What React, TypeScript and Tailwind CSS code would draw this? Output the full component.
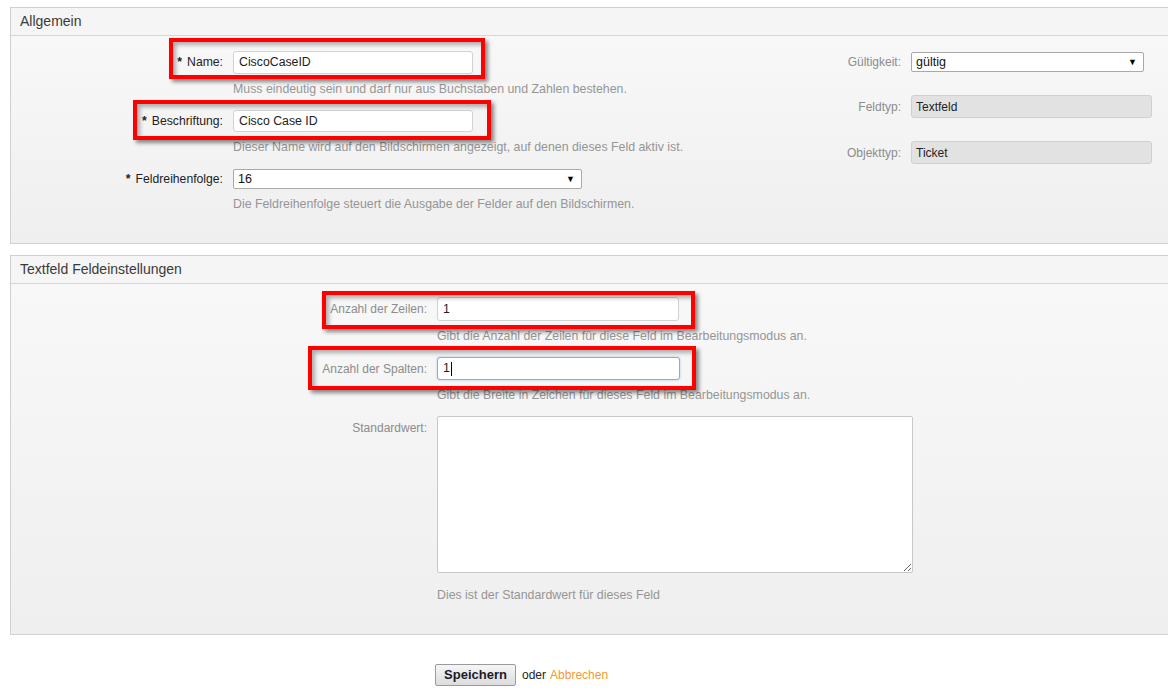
import React from 'react';

const font = { fontFamily: '"Liberation Sans", Arial, sans-serif' };

function RedMark({ className }: { className: string }) {
  return (
    <div
      className={`pointer-events-none absolute border-[4px] border-[#f00] shadow-[3px_3px_4px_rgba(0,0,0,0.45),inset_3px_3px_4px_rgba(0,0,0,0.3)] ${className}`}
    />
  );
}

function Select({ value, className }: { value: string; className: string }) {
  return (
    <div
      className={`flex items-center justify-between rounded-[2px] border border-[#a9a9a9] bg-white pl-[4px] pr-[6px] text-[12.5px] text-[#111] ${className}`}
    >
      <span>{value}</span>
      <span className="text-[9px] leading-none text-black">▼</span>
    </div>
  );
}

function TextInput({ value, className, focus }: { value: string; className: string; focus?: boolean }) {
  return (
    <div
      className={`flex items-center rounded-[3px] border bg-white pl-[5px] text-[12.3px] text-[#222] ${
        focus ? 'border-[#8aaedc] shadow-[0_0_2px_rgba(80,130,200,0.5)]' : 'border-[#d2d2d2]'
      } ${className}`}
    >
      {value}
      {focus && <span className="ml-[1px] h-[14px] w-px bg-black" />}
    </div>
  );
}

function ReadOnly({ value }: { value: string }) {
  return (
    <div className="flex h-[23px] w-[241px] items-center rounded-[3px] border border-[#cfcfcf] bg-[#e2e2e2] pl-[4px] text-[12px] text-[#222]">
      {value}
    </div>
  );
}

function Help({ children, className }: { children: React.ReactNode; className: string }) {
  return <div className={`text-[12.35px] leading-[14px] text-[#959595] ${className}`}>{children}</div>;
}

export default function App() {
  return (
    <div className="h-[692px] w-[1168px] overflow-hidden bg-white" style={font}>
      {/* Allgemein */}
      <div className="ml-[10px] mt-[7px] w-[1170px] border border-[#d0d0d0]">
        <div className="flex h-[28px] items-center border-b border-[#d6d6d6] bg-[#f5f5f5] pl-[9px] text-[14px] text-[#3a3a3a]">
          Allgemein
        </div>
        <div className="relative flex h-[207px] bg-gradient-to-b from-[#f8f8f8] to-[#efefef]">
          <div className="w-[800px] pt-[15px]">
            <div className="flex items-center">
              <label className="w-[222px] pr-[10px] text-right text-[12.2px] text-[#222]">
                <span className="mr-[5px] font-bold">*</span>Name:
              </label>
              <TextInput value="CiscoCaseID" className="h-[23px] w-[240px]" />
            </div>
            <Help className="ml-[222px] mt-[8px]">
              Muss eindeutig sein und darf nur aus Buchstaben und Zahlen bestehen.
            </Help>
            <div className="mt-[14px] flex items-center">
              <label className="w-[222px] pr-[10px] text-right text-[12.2px] text-[#222]">
                <span className="mr-[5px] font-bold">*</span>Beschriftung:
              </label>
              <TextInput value="Cisco Case ID" className="h-[22px] w-[240px]" />
            </div>
            <Help className="ml-[222px] mt-[8px]">
              Dieser Name wird auf den Bildschirmen angezeigt, auf denen dieses Feld aktiv ist.
            </Help>
            <div className="mt-[15px] flex items-center">
              <label className="w-[222px] pr-[10px] text-right text-[12.2px] text-[#222]">
                <span className="mr-[5px] font-bold">*</span>Feldreihenfolge:
              </label>
              <Select value="16" className="h-[20px] w-[349px]" />
            </div>
            <Help className="ml-[222px] mt-[8px]">
              Die Feldreihenfolge steuert die Ausgabe der Felder auf den Bildschirmen.
            </Help>
          </div>

          <div className="pt-[16px]">
            <div className="flex items-center">
              <label className="w-[90px] text-right text-[12px] text-[#8c8c8c]">Gültigkeit:</label>
              <Select value="gültig" className="ml-[10px] h-[20px] w-[233px]" />
            </div>
            <div className="mt-[23px] flex items-center">
              <label className="w-[90px] text-right text-[12px] text-[#8c8c8c]">Feldtyp:</label>
              <div className="ml-[10px]">
                <ReadOnly value="Textfeld" />
              </div>
            </div>
            <div className="mt-[23px] flex items-center">
              <label className="w-[90px] text-right text-[12px] text-[#8c8c8c]">Objekttyp:</label>
              <div className="ml-[10px]">
                <ReadOnly value="Ticket" />
              </div>
            </div>
          </div>

          <RedMark className="left-[158px] top-[2px] h-[41px] w-[316px]" />
          <RedMark className="left-[122px] top-[64px] h-[40px] w-[358px]" />
        </div>
      </div>

      {/* Textfeld Feldeinstellungen */}
      <div className="ml-[10px] mt-[11px] w-[1170px] border border-[#d0d0d0]">
        <div className="flex h-[28px] items-center border-b border-[#d6d6d6] bg-[#f5f5f5] pl-[9px] text-[14px] text-[#3a3a3a]">
          Textfeld Feldeinstellungen
        </div>
        <div className="relative h-[350px] bg-gradient-to-b from-[#f8f8f8] to-[#efefef] pt-[13px]">
          <div className="flex items-center">
            <label className="w-[416px] text-right text-[12px] text-[#8c8c8c]">Anzahl der Zeilen:</label>
            <TextInput value="1" className="ml-[10px] h-[24px] w-[242px]" />
          </div>
          <Help className="ml-[426px] mt-[8px]">
            Gibt die Anzahl der Zeilen für diese Feld im Bearbeitungsmodus an.
          </Help>
          <div className="mt-[14px] flex items-center">
            <label className="w-[416px] text-right text-[12px] text-[#8c8c8c]">Anzahl der Spalten:</label>
            <TextInput value="1" focus className="ml-[10px] h-[23px] w-[243px]" />
          </div>
          <Help className="ml-[426px] mt-[8px]">
            Gibt die Breite in Zeichen für dieses Feld im Bearbeitungsmodus an.
          </Help>
          <div className="mt-[14px] flex items-start">
            <label className="w-[416px] pt-[3px] text-right text-[12px] text-[#8c8c8c]">Standardwert:</label>
            <textarea
              className="ml-[10px] h-[157px] w-[476px] rounded-[2px] border border-[#c8c8c8] bg-white text-[12px] outline-none"
              defaultValue=""
            />
          </div>
          <Help className="ml-[426px] mt-[15px]">Dies ist der Standardwert für dieses Feld</Help>

          <RedMark className="left-[311px] top-[7px] h-[38px] w-[373px]" />
          <RedMark className="left-[297px] top-[62px] h-[44px] w-[388px]" />
        </div>
      </div>

      {/* Aktionen */}
      <div className="mt-[29px] flex items-center pl-[435px] text-[12px]">
        <button className="h-[22px] w-[81px] rounded-[2px] border border-[#9a9a9a] bg-gradient-to-b from-[#f6f6f6] to-[#dcdcdc] text-[13px] font-bold text-[#1a1a2a]">
          Speichern
        </button>
        <span className="ml-[6px] text-[#222]">oder</span>
        <a className="ml-[4px] text-[#f39a33]" href="#">
          Abbrechen
        </a>
      </div>
    </div>
  );
}
